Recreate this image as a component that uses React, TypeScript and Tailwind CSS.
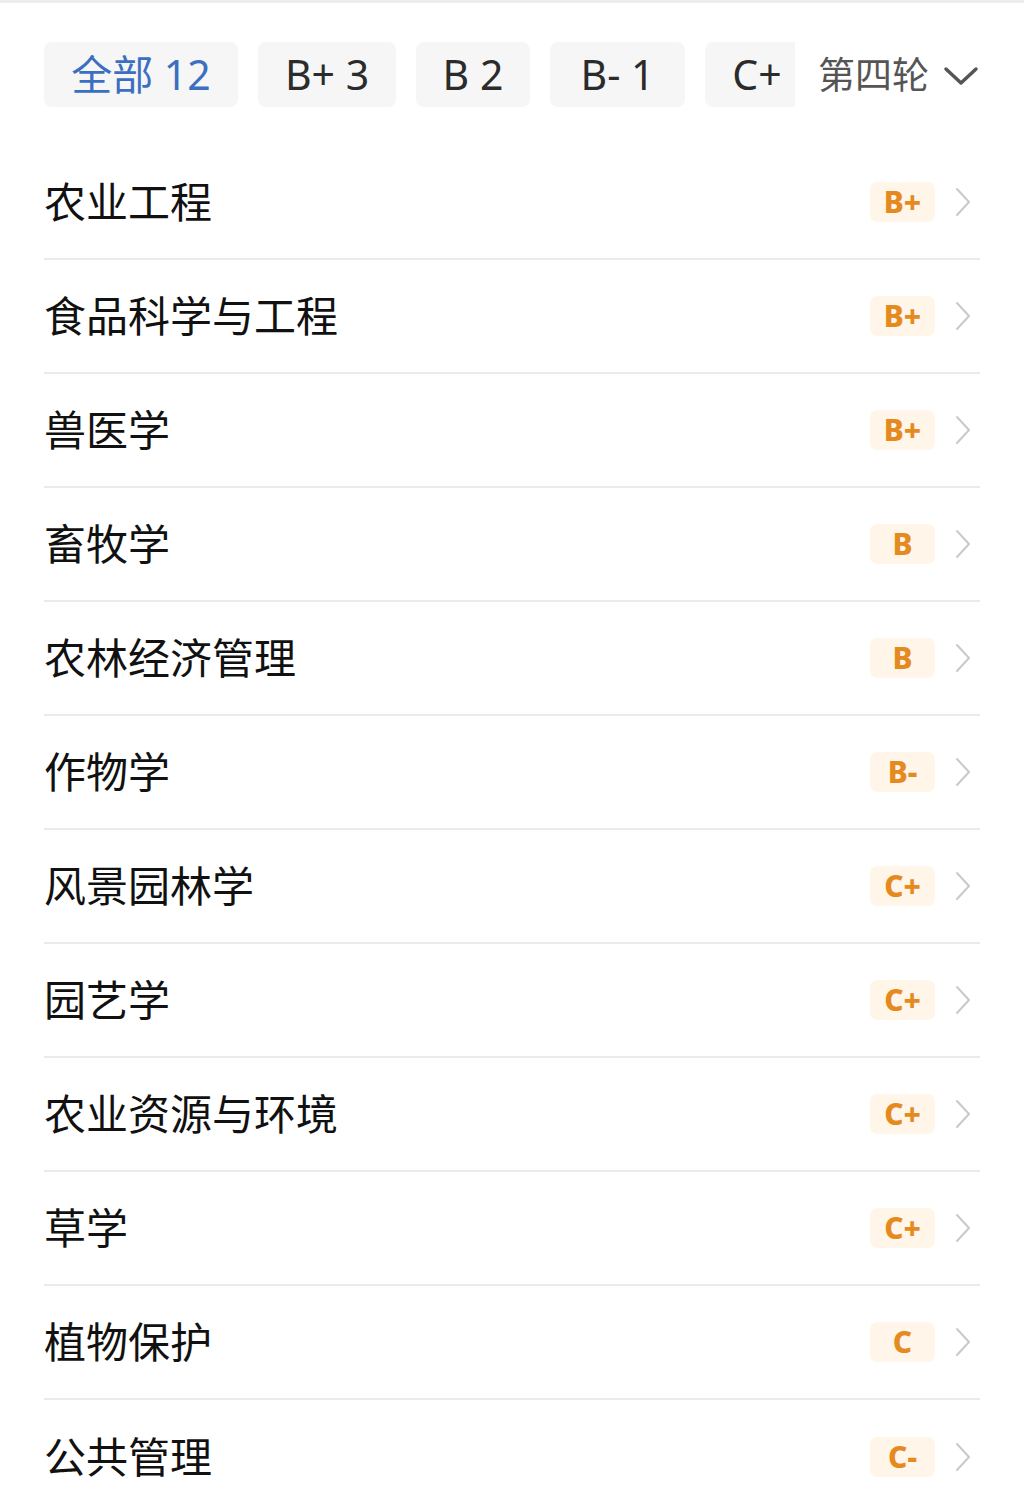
import { FC } from 'react';

const tabs = [
  { label: '全部 12', active: true, w: 'w-[194px]' },
  { label: 'B+ 3', active: false, w: 'w-[138px]' },
  { label: 'B 2', active: false, w: 'w-[114px]' },
  { label: 'B- 1', active: false, w: 'w-[135px]' },
  { label: 'C+', active: false, w: 'w-[104px]' },
];

const subjects = [
  { name: '农业工程', grade: 'B+' },
  { name: '食品科学与工程', grade: 'B+' },
  { name: '兽医学', grade: 'B+' },
  { name: '畜牧学', grade: 'B' },
  { name: '农林经济管理', grade: 'B' },
  { name: '作物学', grade: 'B-' },
  { name: '风景园林学', grade: 'C+' },
  { name: '园艺学', grade: 'C+' },
  { name: '农业资源与环境', grade: 'C+' },
  { name: '草学', grade: 'C+' },
  { name: '植物保护', grade: 'C' },
  { name: '公共管理', grade: 'C-' },
];

const Chevron: FC = () => (
  <svg width="18" height="30" viewBox="0 0 18 30" fill="none" className="ml-[19px]">
    <polyline points="3,2 15,15 3,28" stroke="#c9c9c9" strokeWidth="2" strokeLinecap="round" strokeLinejoin="round" />
  </svg>
);

const App: FC = () => {
  return (
    <div
      className="w-[1024px] min-h-[1496px] bg-white border-t-[3px] border-[#ededed] overflow-hidden"
      style={{ fontFamily: '"Noto Sans", "Noto Sans CJK SC", sans-serif' }}
    >
      {/* Grade filter tabs */}
      <div className="flex items-center pl-[44px] pt-[39px]">
        <div className="w-[751px] overflow-hidden">
          <div className="flex gap-[20px] w-max">
            {tabs.map((t) => (
              <div
                key={t.label}
                className={`${t.w} h-[65px] shrink-0 rounded-[8px] bg-[#f6f6f6] flex items-center justify-center text-[41px] leading-none ${
                  t.active ? 'text-[#3b6fc2]' : 'text-[#2b2b2b]'
                }`}
              >
                {t.label}
              </div>
            ))}
          </div>
        </div>
        <div className="ml-[23px] flex items-center text-[37px] leading-none text-[#555555]">
          <span>第四轮</span>
          <svg width="36" height="24" viewBox="0 0 36 24" fill="none" className="ml-[14px] mt-[2px]">
            <polyline points="3,5 18,19 33,5" stroke="#555555" strokeWidth="3.5" strokeLinecap="round" strokeLinejoin="round" />
          </svg>
        </div>
      </div>

      {/* Subject list */}
      <div className="mt-[39px] px-[44px]">
        {subjects.map((s) => (
          <div
            key={s.name}
            className="h-[114px] flex items-center border-b-2 border-[#ebebeb] last:border-b-0"
          >
            <span className="flex-1 text-[42px] leading-none text-[#111111]">{s.name}</span>
            <div className="w-[65px] h-[40px] rounded-[7px] bg-[#fff5e9] flex items-center justify-center text-[30px] font-extrabold leading-none text-[#e58a1e]">
              {s.grade}
            </div>
            <Chevron />
            <div className="w-[8px]" />
          </div>
        ))}
      </div>
    </div>
  );
};

export default App;
